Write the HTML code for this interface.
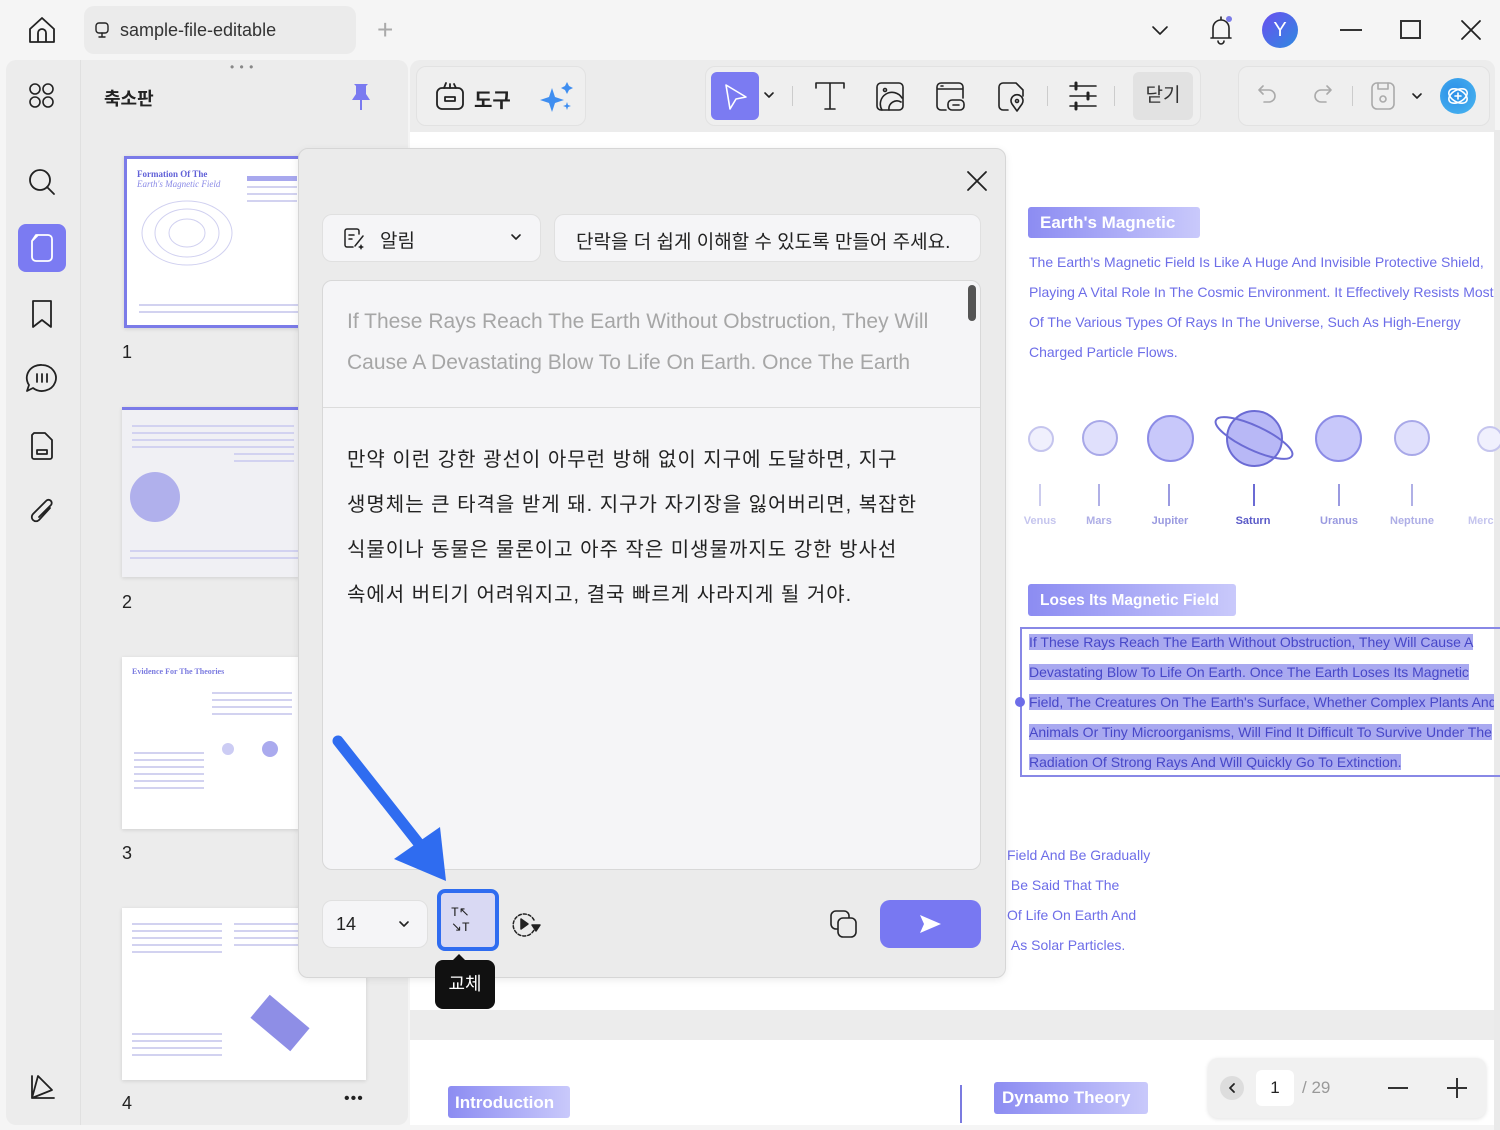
<!DOCTYPE html>
<html><head><meta charset="utf-8"><style>
*{box-sizing:border-box;margin:0;padding:0}
body{width:1500px;height:1130px;overflow:hidden;background:#f5f5f5;font-family:"Liberation Sans","Noto Sans CJK KR",sans-serif;position:relative;color:#222}
.a{position:absolute}
.ic{position:absolute;fill:none;stroke:#222;stroke-width:1.8;stroke-linecap:round;stroke-linejoin:round}
.pt{color:#6d6de8;font-size:14px;line-height:30px}
.hl{background:#a9a9f0;color:#4747c8}
.tag{position:absolute;background:linear-gradient(90deg,#8c8cf2,#c9c9fb);color:#fff;font-weight:bold;border-radius:3px;white-space:nowrap}
.pl{position:absolute;border-radius:50%;border:2px solid #8b8be6;background:#c8c8fa}
.lbl{position:absolute;font-size:11px;font-weight:bold;color:#9a9ae0;text-align:center;width:70px}
.tk{position:absolute;width:2px;height:22px;background:#9a9ae0}
.th{position:absolute;background:#fff;box-shadow:0 1px 4px rgba(0,0,0,.12);overflow:hidden}
.ln{height:2px;background:#d2d2f0;margin:5px 0}
</style></head><body>

<!-- top bar -->
<svg class="ic" style="left:26px;top:14px" width="32" height="32" viewBox="0 0 32 32"><path d="M4 15 L16 4 L28 15 V28 H4Z M12 28 V19 a4 4 0 0 1 8 0 V28"/></svg>
<div class="a" style="left:84px;top:6px;width:272px;height:48px;background:#ebebeb;border-radius:10px"></div>
<svg class="ic" style="left:94px;top:22px;stroke-width:1.4" width="16" height="16" viewBox="0 0 16 16"><rect x="2" y="1" width="12" height="10" rx="3"/><path d="M8 11V15M5 15H11"/></svg>
<div class="a" style="left:120px;top:20px;font-size:18px;color:#333">sample-file-editable</div>
<div class="a" style="left:377px;top:14px;font-size:28px;color:#aaa;font-weight:200">+</div>
<svg class="ic" style="left:1150px;top:22px;stroke-width:1.6" width="20" height="16" viewBox="0 0 20 16"><path d="M3 5 L10 12 L17 5"/></svg>
<svg class="ic" style="left:1206px;top:14px;stroke-width:1.6" width="30" height="32" viewBox="0 0 30 32"><path d="M7 24 V14 a8 8 0 0 1 16 0 V24 H5 H25 M12 27 a3 3 0 0 0 6 0 M15 3V6"/></svg>
<div class="a" style="left:1226px;top:16px;width:6px;height:6px;border-radius:50%;background:#7b7be8"></div>
<div class="a" style="left:1262px;top:12px;width:36px;height:36px;border-radius:50%;background:linear-gradient(135deg,#6a4ff0,#2e8ae0);color:#fff;font-size:20px;text-align:center;line-height:36px">Y</div>
<div class="a" style="left:1340px;top:29px;width:22px;height:2px;background:#333"></div>
<div class="a" style="left:1400px;top:20px;width:21px;height:19px;border:2px solid #333"></div>
<svg class="ic" style="left:1460px;top:19px;stroke-width:1.8" width="22" height="22" viewBox="0 0 22 22"><path d="M2 2L20 20M20 2L2 20"/></svg>

<!-- left panel -->
<div class="a" style="left:6px;top:60px;width:402px;height:1065px;background:#ececec;border-radius:10px"></div>
<div class="a" style="left:80px;top:60px;width:1px;height:1065px;background:#e0e0e0"></div>
<div class="a" style="left:230px;top:60px;font-size:12px;color:#888;letter-spacing:1px">• • •</div>
<svg class="ic" style="left:28px;top:82px;stroke-width:1.6" width="28" height="28" viewBox="0 0 28 28"><circle cx="7" cy="7" r="5"/><circle cx="20" cy="7" r="5"/><circle cx="7" cy="20" r="5"/><circle cx="20" cy="20" r="5"/></svg>
<div class="a" style="left:104px;top:85px;font-size:18px;font-weight:bold">축소판</div>
<svg class="a" style="left:348px;top:82px" width="26" height="30" viewBox="0 0 26 30"><path d="M6 2H20L18 4V12L22 18H4L8 12V4Z" fill="#7a7af0"/><path d="M13 18V28" stroke="#7a7af0" stroke-width="2"/></svg>
<svg class="ic" style="left:26px;top:166px" width="32" height="32" viewBox="0 0 32 32"><circle cx="14" cy="14" r="10"/><path d="M21 21L28 28"/></svg>
<div class="a" style="left:18px;top:224px;width:48px;height:48px;border-radius:8px;background:#7b7bf2"></div>
<svg class="ic" style="left:28px;top:232px;stroke:#fff" width="28" height="32" viewBox="0 0 28 32"><path d="M8 3H20 a4 4 0 0 1 4 4V25 a4 4 0 0 1-4 4H8 a4 4 0 0 1-4-4V9Z M4 9 L10 3"/></svg>
<svg class="ic" style="left:28px;top:298px" width="28" height="32" viewBox="0 0 28 32"><path d="M5 3H23V29L14 22L5 29Z"/></svg>
<svg class="ic" style="left:24px;top:362px" width="36" height="34" viewBox="0 0 36 34"><path d="M18 3 a14 13 0 1 1 -9 23 L3 29 L5 23 a14 13 0 0 1 13 -20Z M13 12V20M18 12V20M23 12V20"/></svg>
<svg class="ic" style="left:28px;top:430px" width="28" height="32" viewBox="0 0 28 32"><path d="M6 3H17L24 10V27 a2 2 0 0 1-2 2H6 a2 2 0 0 1-2-2V5Z M9 20H19V24H9Z"/></svg>
<svg class="ic" style="left:28px;top:496px" width="30" height="32" viewBox="0 0 30 32"><path d="M22 12 L11 24 a4 4 0 0 1-6-6 L18 5 a3 3 0 0 1 5 4 L11 21"/></svg>
<svg class="ic" style="left:28px;top:1072px" width="30" height="30" viewBox="0 0 30 30"><path d="M4 4V26H26 M4 26 L10 4 L24 18 Z"/></svg>

<!-- thumbnails -->
<div class="th" style="left:124px;top:156px;width:180px;height:172px;border:3px solid #7b7be8;padding:10px">
 <div style="font-family:'Liberation Serif',serif;font-weight:bold;color:#6262d8;font-size:9px">Formation Of The</div>
 <div style="font-family:'Liberation Serif',serif;font-style:italic;color:#8a8ae6;font-size:9px">Earth's Magnetic Field</div>
 <svg width="100" height="80" style="margin-top:4px"><g fill="none" stroke="#d0d0f0"><ellipse cx="50" cy="40" rx="45" ry="32"/><ellipse cx="50" cy="40" rx="32" ry="24"/><ellipse cx="50" cy="40" rx="18" ry="14"/></g></svg>
 <div style="position:absolute;left:12px;top:140px;width:160px"><div class="ln"></div><div class="ln"></div></div>
 <div style="position:absolute;left:120px;top:12px;width:50px"><div class="ln" style="background:#a8a8ee;height:5px"></div><div class="ln"></div><div class="ln"></div><div class="ln"></div></div>
</div>
<div class="a" style="left:122px;top:342px;font-size:18px">1</div>
<div class="th" style="left:122px;top:407px;width:178px;height:170px;background:#f0f0f4;border-top:3px solid #7b7be8;padding:10px">
 <div class="ln"></div><div class="ln"></div><div class="ln"></div><div class="ln"></div>
 <div style="position:absolute;left:8px;top:62px;width:50px;height:50px;border-radius:50%;background:#b0b0ec"></div>
 <div style="position:absolute;left:112px;top:10px;width:60px"><div class="ln"></div><div class="ln"></div><div class="ln"></div><div class="ln"></div><div class="ln"></div><div class="ln"></div></div>
 <div style="position:absolute;left:8px;top:135px;width:170px"><div class="ln"></div><div class="ln"></div></div>
</div>
<div class="a" style="left:122px;top:592px;font-size:18px">2</div>
<div class="th" style="left:122px;top:657px;width:178px;height:172px;padding:10px"><div style="font-family:'Liberation Serif',serif;font-size:8px;color:#7b7be0;font-weight:bold">Evidence For The Theories</div>
 <div style="position:absolute;left:12px;top:90px;width:70px"><div class="ln"></div><div class="ln"></div><div class="ln"></div><div class="ln"></div><div class="ln"></div><div class="ln"></div></div>
 <div style="position:absolute;left:90px;top:30px;width:80px"><div class="ln"></div><div class="ln"></div><div class="ln"></div><div class="ln"></div></div>
 <div style="position:absolute;left:100px;top:86px;width:12px;height:12px;border-radius:50%;background:#ccccf4"></div>
 <div style="position:absolute;left:140px;top:84px;width:16px;height:16px;border-radius:50%;background:#aaaaee"></div>
</div>
<div class="a" style="left:122px;top:843px;font-size:18px">3</div>
<div class="th" style="left:122px;top:908px;width:244px;height:172px">
 <div style="position:absolute;left:10px;top:10px;width:90px"><div class="ln"></div><div class="ln"></div><div class="ln"></div><div class="ln"></div><div class="ln"></div></div>
 <div style="position:absolute;left:112px;top:10px;width:120px"><div class="ln"></div><div class="ln"></div><div class="ln"></div><div class="ln"></div></div>
 <div style="position:absolute;left:10px;top:120px;width:90px"><div class="ln"></div><div class="ln"></div><div class="ln"></div><div class="ln"></div></div>
 <div style="position:absolute;left:132px;top:100px;width:52px;height:30px;background:#8e8ee6;transform:rotate(40deg)"></div></div>
<div class="a" style="left:122px;top:1093px;font-size:18px">4</div>
<div class="a" style="left:344px;top:1090px;font-size:16px;letter-spacing:1px">•••</div>

<!-- toolbar -->
<div class="a" style="left:410px;top:60px;width:1085px;height:72px;background:#ececec;border-radius:10px 10px 0 0"></div>
<div class="a" style="left:416px;top:66px;width:170px;height:60px;border:1px solid #e2e2e2;border-radius:10px;background:#efefef"></div>
<svg class="ic" style="left:434px;top:80px" width="32" height="32" viewBox="0 0 32 32"><rect x="3" y="8" width="26" height="21" rx="5"/><path d="M11 17H21V21H11Z M10 8 L12 3 M16 8V4 M22 8 L20 4"/></svg>
<div class="a" style="left:474px;top:84px;font-size:20px;font-weight:bold">도구</div>
<svg class="a" style="left:540px;top:80px" width="34" height="34" viewBox="0 0 34 34"><path d="M12 8 L15 17 L24 20 L15 23 L12 32 L9 23 L0 20 L9 17Z M27 2 L29 6 L33 8 L29 10 L27 14 L25 10 L21 8 L25 6Z M27 22 L28 25 L31 26 L28 27 L27 30 L26 27 L23 26 L26 25Z" fill="#3f8ef0"/></svg>
<div class="a" style="left:705px;top:66px;width:496px;height:60px;border:1px solid #e2e2e2;border-radius:10px;background:#efefef"></div>
<div class="a" style="left:711px;top:72px;width:48px;height:48px;border-radius:6px;background:#7b7bf2"></div>
<svg class="ic" style="left:722px;top:82px;stroke:#fff;stroke-width:1.6" width="28" height="30" viewBox="0 0 28 30"><path d="M4 3 L24 15 L14 17 L8 27Z"/></svg>
<svg class="ic" style="left:763px;top:90px;stroke-width:1.6" width="12" height="10" viewBox="0 0 12 10"><path d="M2 3 L6 7 L10 3"/></svg>
<div class="a" style="left:792px;top:86px;width:1px;height:20px;background:#ccc"></div>
<svg class="ic" style="left:814px;top:80px;stroke-width:1.6" width="32" height="32" viewBox="0 0 32 32"><path d="M2 8 V3 H30 V8 M16 3V29 M11 29H21"/></svg>
<svg class="ic" style="left:874px;top:80px;stroke-width:1.6" width="32" height="32" viewBox="0 0 32 32"><rect x="3" y="3" width="26" height="27" rx="4"/><circle cx="11" cy="10" r="1.5"/><path d="M8 30 a10 10 0 0 1 20 -12 M15 30 a8 8 0 0 1 12 -8"/></svg>
<svg class="ic" style="left:934px;top:80px;stroke-width:1.6" width="32" height="32" viewBox="0 0 32 32"><path d="M12 30H7 a4 4 0 0 1-4-4V7 a4 4 0 0 1 4-4H25 a4 4 0 0 1 4 4V18 M3 9H29 M7 6H9"/><rect x="14" y="20" width="16" height="10" rx="4"/><path d="M19 25H25"/></svg>
<svg class="ic" style="left:996px;top:80px;stroke-width:1.6" width="32" height="32" viewBox="0 0 32 32"><path d="M12 30H7 a4 4 0 0 1-4-4V7 a4 4 0 0 1 4-4H20 L27 10V16"/><path d="M21 31 L16 24 a6 6 0 1 1 10 0Z"/><circle cx="21" cy="21" r="1.5"/></svg>
<div class="a" style="left:1047px;top:86px;width:1px;height:20px;background:#ccc"></div>
<svg class="ic" style="left:1068px;top:80px;stroke-width:1.6" width="30" height="32" viewBox="0 0 30 32"><path d="M2 6H28 M2 16H28 M2 26H28"/><path d="M8 3V9 M20 13V19 M8 23V29" stroke-width="3"/></svg>
<div class="a" style="left:1114px;top:86px;width:1px;height:20px;background:#ccc"></div>
<div class="a" style="left:1133px;top:72px;width:60px;height:48px;border-radius:6px;background:#e2e2e2;font-size:19px;text-align:center;line-height:48px;color:#333">닫기</div>
<div class="a" style="left:1238px;top:66px;width:252px;height:60px;border:1px solid #e2e2e2;border-radius:10px;background:#efefef"></div>
<svg class="ic" style="left:1256px;top:84px;stroke:#aaa;stroke-width:1.6" width="24" height="24" viewBox="0 0 24 24"><path d="M7 2 L3 6 L7 10 M3 6H13 a6 6 0 0 1 0 12H8"/></svg>
<svg class="ic" style="left:1310px;top:84px;stroke:#aaa;stroke-width:1.6" width="24" height="24" viewBox="0 0 24 24"><path d="M17 2 L21 6 L17 10 M21 6H11 a6 6 0 0 0 0 12H16"/></svg>
<div class="a" style="left:1352px;top:86px;width:1px;height:20px;background:#ccc"></div>
<svg class="ic" style="left:1370px;top:81px;stroke:#aaa;stroke-width:1.6" width="26" height="30" viewBox="0 0 26 30"><rect x="2" y="2" width="22" height="26" rx="5"/><path d="M8 2V8H18V2"/><circle cx="13" cy="18" r="3"/></svg>
<svg class="ic" style="left:1411px;top:91px;stroke-width:1.6" width="12" height="10" viewBox="0 0 12 10"><path d="M2 3 L6 7 L10 3"/></svg>
<div class="a" style="left:1440px;top:78px;width:36px;height:36px;border-radius:50%;background:radial-gradient(circle at 40% 40%,#2c8ee8,#4bb8f0)"></div>
<svg class="ic" style="left:1445px;top:83px;stroke:#fff;stroke-width:1.6" width="26" height="26" viewBox="0 0 26 26"><ellipse cx="13" cy="13" rx="10" ry="6" transform="rotate(-30 13 13)"/><ellipse cx="13" cy="13" rx="10" ry="6" transform="rotate(30 13 13)"/><path d="M13 10V16M10 13H16"/></svg>

<!-- document -->
<div class="a" style="left:410px;top:132px;width:1085px;height:878px;background:#fff"></div>
<div class="a" style="left:410px;top:1010px;width:1085px;height:30px;background:#ececec"></div>
<div class="a" style="left:410px;top:1040px;width:1085px;height:85px;background:#fff"></div>
<div class="a" style="left:1494px;top:130px;width:6px;height:1000px;background:#eaeaea"></div>

<div class="tag" style="left:1028px;top:207px;width:172px;height:31px;font-size:17px;padding:6px 12px">Earth's Magnetic</div>
<div class="a pt" style="left:1029px;top:247px;width:465px;white-space:nowrap;overflow:hidden">The Earth's Magnetic Field Is Like A Huge And Invisible Protective Shield,<br>Playing A Vital Role In The Cosmic Environment. It Effectively Resists Most<br>Of The Various Types Of Rays In The Universe, Such As High-Energy<br>Charged Particle Flows.</div>

<div class="pl" style="left:1028px;top:426px;width:26px;height:26px;background:#f0f0fd;border-color:#c5c5ee"></div>
<div class="pl" style="left:1082px;top:420px;width:36px;height:36px;background:#e0e0fc;border-color:#a8a8e8"></div>
<div class="pl" style="left:1147px;top:415px;width:47px;height:47px"></div>
<div class="pl" style="left:1226px;top:410px;width:57px;height:57px;background:#b8b8f6;border-color:#6b6bd4"></div>
<svg class="a" style="left:1214px;top:410px" width="82" height="56"><ellipse cx="40" cy="28" rx="42" ry="12" transform="rotate(25 40 28)" fill="none" stroke="#6b6bd4" stroke-width="2"/></svg>
<div class="pl" style="left:1315px;top:415px;width:47px;height:47px"></div>
<div class="pl" style="left:1394px;top:420px;width:36px;height:36px;background:#e0e0fc;border-color:#a8a8e8"></div>
<div class="pl" style="left:1477px;top:426px;width:26px;height:26px;background:#f0f0fd;border-color:#c5c5ee"></div>
<div class="tk" style="left:1039px;top:484px;background:#ccccee"></div><div class="tk" style="left:1098px;top:484px;background:#b0b0e6"></div><div class="tk" style="left:1168px;top:484px"></div><div class="tk" style="left:1253px;top:484px;background:#6b6bd4"></div><div class="tk" style="left:1338px;top:484px"></div><div class="tk" style="left:1411px;top:484px;background:#b0b0e6"></div>
<div class="lbl" style="left:1005px;top:515px;color:#c5c5ee">Venus</div><div class="lbl" style="left:1064px;top:515px;color:#aeaee6">Mars</div><div class="lbl" style="left:1135px;top:515px">Jupiter</div><div class="lbl" style="left:1218px;top:515px;color:#5a5ac8">Saturn</div><div class="lbl" style="left:1304px;top:515px">Uranus</div><div class="lbl" style="left:1377px;top:515px;color:#aeaee6">Neptune</div><div class="lbl" style="left:1450px;top:515px;color:#c5c5ee;text-align:left;padding-left:18px">Merc</div>

<div class="tag" style="left:1028px;top:584px;width:208px;height:32px;font-size:15.5px;padding:8px 12px">Loses Its Magnetic Field</div>
<div class="a" style="left:1020px;top:627px;width:480px;height:150px;border:2px solid #8888e6;border-right:none"></div>
<div class="a" style="left:1015px;top:697px;width:10px;height:10px;border-radius:50%;background:#6d6de8"></div>
<div class="a pt" style="left:1029px;top:627px;width:465px;white-space:nowrap;overflow:hidden"><span class="hl">If These Rays Reach The Earth Without Obstruction, They Will Cause A </span><br><span class="hl">Devastating Blow To Life On Earth. Once The Earth Loses Its Magnetic </span><br><span class="hl">Field, The Creatures On The Earth's Surface, Whether Complex Plants And</span><br><span class="hl">Animals Or Tiny Microorganisms, Will Find It Difficult To Survive Under The</span><br><span class="hl">Radiation Of Strong Rays And Will Quickly Go To Extinction.</span></div>
<div class="a pt" style="left:1007px;top:840px;white-space:nowrap">Field And Be Gradually<br>&nbsp;Be Said That The<br>Of Life On Earth And<br>&nbsp;As Solar Particles.</div>

<div class="tag" style="left:448px;top:1086px;width:122px;height:32px;font-size:17px;padding:7px 7px">Introduction</div>
<div class="a" style="left:960px;top:1085px;width:2px;height:38px;background:#7b7be0"></div>
<div class="tag" style="left:994px;top:1082px;width:154px;height:32px;font-size:17px;padding:6px 8px">Dynamo Theory</div>

<!-- page nav -->
<div class="a" style="left:1208px;top:1058px;width:278px;height:60px;border-radius:10px;background:#f1f1f1;box-shadow:0 1px 4px rgba(0,0,0,.12)"></div>
<div class="a" style="left:1220px;top:1076px;width:24px;height:24px;border-radius:50%;background:#ddd"></div>
<svg class="ic" style="left:1226px;top:1082px;stroke-width:1.8" width="12" height="12" viewBox="0 0 12 12"><path d="M8 2 L4 6 L8 10"/></svg>
<div class="a" style="left:1256px;top:1070px;width:38px;height:36px;border-radius:6px;background:#fff;font-size:17px;text-align:center;line-height:36px">1</div>
<div class="a" style="left:1302px;top:1078px;font-size:17px;color:#999">/ 29</div>
<div class="a" style="left:1388px;top:1087px;width:20px;height:2px;background:#333"></div>
<div class="a" style="left:1447px;top:1087px;width:20px;height:2px;background:#333"></div>
<div class="a" style="left:1456px;top:1078px;width:2px;height:20px;background:#333"></div>

<!-- dialog -->
<div class="a" style="left:298px;top:148px;width:708px;height:830px;background:#ebebeb;border:1px solid #d6d6d6;border-radius:10px;box-shadow:0 2px 8px rgba(0,0,0,.08)"></div>
<svg class="ic" style="left:966px;top:170px;stroke-width:1.8" width="22" height="22" viewBox="0 0 22 22"><path d="M2 2L20 20M20 2L2 20"/></svg>
<div class="a" style="left:322px;top:214px;width:219px;height:48px;border:1px solid #e0e0e0;border-radius:10px;background:#f5f5f7"></div>
<svg class="ic" style="left:342px;top:226px;stroke-width:1.5" width="24" height="24" viewBox="0 0 24 24"><path d="M11 21H5 a2 2 0 0 1-2-2V5 a2 2 0 0 1 2-2H15 a2 2 0 0 1 2 2V8 M7 9H12 M7 13H10 M13 20 L21 10"/><path d="M19 18 L20 20 L22 21 L20 22 L19 24 L18 22 L16 21 L18 20Z" fill="#222" stroke="none"/></svg>
<div class="a" style="left:380px;top:226px;font-size:19px">알림</div>
<svg class="ic" style="left:510px;top:232px;stroke-width:1.6" width="12" height="10" viewBox="0 0 12 10"><path d="M2 3 L6 7 L10 3"/></svg>
<div class="a" style="left:554px;top:214px;width:427px;height:48px;border:1px solid #e0e0e0;border-radius:10px;background:#f5f5f7;font-size:19px;padding:12px 0 0 21px;white-space:nowrap">단락을 더 쉽게 이해할 수 있도록 만들어 주세요.</div>
<div class="a" style="left:322px;top:280px;width:659px;height:590px;border:1px solid #d8d8d8;border-radius:10px;background:#f5f5f7;overflow:hidden">
 <div style="height:127px;border-bottom:1px solid #dcdcdc;padding:20px 24px 0;font-size:21px;line-height:41px;color:#a6a6a6;overflow:hidden">If These Rays Reach The Earth Without Obstruction, They Will<br>Cause A Devastating Blow To Life On Earth. Once The Earth</div>
 <div style="position:absolute;left:645px;top:4px;width:8px;height:36px;border-radius:4px;background:#555"></div>
 <div style="padding:30px 24px 0;font-size:20px;line-height:45px;color:#222;letter-spacing:1px">만약 이런 강한 광선이 아무런 방해 없이 지구에 도달하면, 지구<br>생명체는 큰 타격을 받게 돼. 지구가 자기장을 잃어버리면, 복잡한<br>식물이나 동물은 물론이고 아주 작은 미생물까지도 강한 방사선<br>속에서 버티기 어려워지고, 결국 빠르게 사라지게 될 거야.</div>
</div>
<!-- arrow -->
<svg class="a" style="left:330px;top:735px" width="120" height="150"><path d="M8 6 L90 110" stroke="#2f6cf0" stroke-width="11" stroke-linecap="round"/><path d="M110 92 L116 146 L64 124Z" fill="#2f6cf0"/></svg>
<div class="a" style="left:322px;top:900px;width:106px;height:48px;border:1px solid #e0e0e0;border-radius:10px;background:#f5f5f7;font-size:18px;padding:13px 0 0 13px">14</div>
<svg class="ic" style="left:398px;top:919px;stroke-width:1.6" width="12" height="10" viewBox="0 0 12 10"><path d="M2 3 L6 7 L10 3"/></svg>
<div class="a" style="left:437px;top:889px;width:62px;height:62px;border:4px solid #2f6cf0;border-radius:8px;background:#d9d9f3"></div>
<div class="a" style="left:451px;top:905px;font-family:'Liberation Mono',monospace;font-size:13px;line-height:15px;color:#222">T↖<br>↘T</div>
<svg class="ic" style="left:510px;top:910px;stroke-width:1.5" width="34" height="30" viewBox="0 0 34 30"><path d="M24 10 a11 11 0 1 0 0 10" stroke-dasharray="3 2"/><path d="M11 9 L18 14 L11 19Z" fill="#222"/><path d="M22 15 L30 15 L26 21Z" fill="#222"/></svg>
<div class="a" style="left:451px;top:946px;width:0;height:0;border:8px solid transparent;border-bottom-color:#111"></div>
<div class="a" style="left:435px;top:960px;width:60px;height:49px;border-radius:8px;background:#111;color:#fff;font-size:18px;text-align:center;line-height:49px">교체</div>
<svg class="ic" style="left:828px;top:908px;stroke-width:1.6" width="32" height="32" viewBox="0 0 32 32"><rect x="3" y="3" width="18" height="18" rx="5"/><rect x="10" y="10" width="18" height="19" rx="5" fill="#ebebeb"/></svg>
<div class="a" style="left:880px;top:900px;width:101px;height:48px;border-radius:10px;background:#7878f2"></div>
<svg class="a" style="left:918px;top:913px" width="24" height="22" viewBox="0 0 24 22"><path d="M2 2 L23 11 L2 20 L6 11Z" fill="#fff"/></svg>
</body></html>
